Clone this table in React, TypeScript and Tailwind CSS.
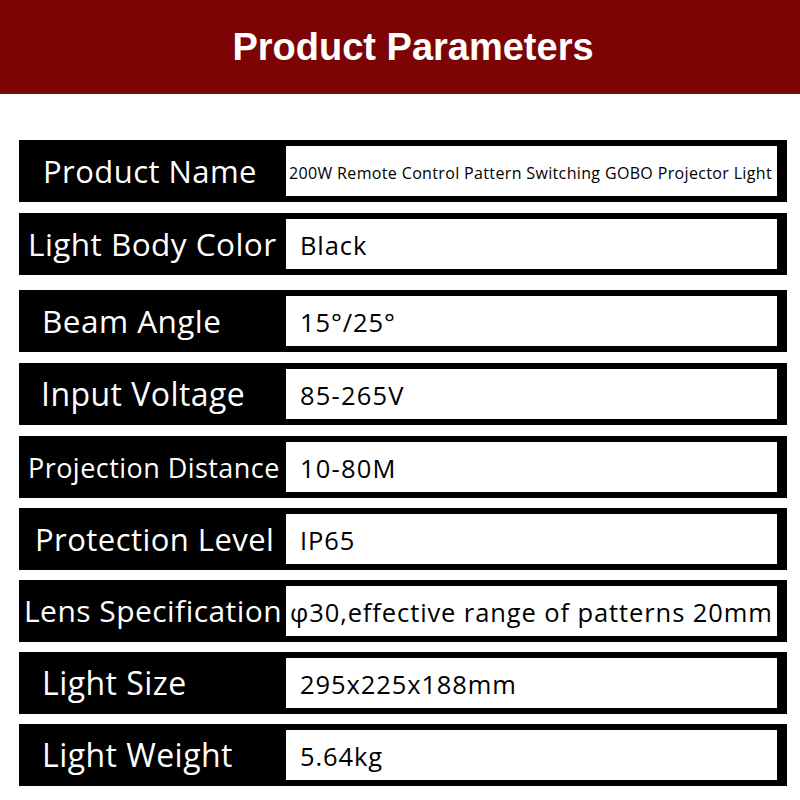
import React from "react";

type Row = {
  label: string;
  value: string;
  mt: string;
  lSize: string;
  lPad: string;
  vSize: string;
  vPad: string;
};

const rows: Row[] = [
  { label: "Product Name", value: "200W Remote Control Pattern Switching GOBO Projector Light", mt: "mt-[46px]", lSize: "text-[31px]", lPad: "pl-[24px]", vSize: "text-[16px] tracking-[0.35px]", vPad: "pl-[3px]" },
  { label: "Light Body Color", value: "Black", mt: "mt-[11px]", lSize: "text-[31.5px]", lPad: "pl-[9px]", vSize: "text-[25.5px] tracking-[0.9px]", vPad: "pl-[14px]" },
  { label: "Beam Angle", value: "15°/25°", mt: "mt-[15px]", lSize: "text-[31.5px]", lPad: "pl-[23px]", vSize: "text-[25.5px] tracking-[0.9px]", vPad: "pl-[14px]" },
  { label: "Input Voltage", value: "85-265V", mt: "mt-[11px]", lSize: "text-[32px]", lPad: "pl-[22px]", vSize: "text-[25.5px] tracking-[1.2px]", vPad: "pl-[14px]" },
  { label: "Projection Distance", value: "10-80M", mt: "mt-[11px]", lSize: "text-[27px]", lPad: "pl-[9px]", vSize: "text-[25.5px] tracking-[1.2px]", vPad: "pl-[14px]" },
  { label: "Protection Level", value: "IP65", mt: "mt-[10px]", lSize: "text-[31px]", lPad: "pl-[16px]", vSize: "text-[25.5px] tracking-[0.9px]", vPad: "pl-[14px]" },
  { label: "Lens Specification", value: "φ30,effective range of patterns 20mm", mt: "mt-[10px]", lSize: "text-[30px]", lPad: "pl-[5px]", vSize: "text-[25.5px] tracking-[0.9px]", vPad: "pl-[4px]" },
  { label: "Light Size", value: "295x225x188mm", mt: "mt-[10px]", lSize: "text-[32px]", lPad: "pl-[23px]", vSize: "text-[25.5px] tracking-[0.9px]", vPad: "pl-[14px]" },
  { label: "Light Weight", value: "5.64kg", mt: "mt-[10px]", lSize: "text-[32px]", lPad: "pl-[23px]", vSize: "text-[25.5px] tracking-[0.9px]", vPad: "pl-[14px]" },
];

export default function App() {
  return (
    <div className="w-[800px] h-[800px] bg-white overflow-hidden" style={{ fontFamily: "'Open Sans', 'Noto Sans', sans-serif" }}>
      <div className="h-[94px] bg-[#7c0404] flex items-center justify-center pl-[26px]">
        <h1 className="text-white text-[38px] font-bold leading-none" style={{ fontFamily: "'Liberation Sans', Arial, sans-serif" }}>
          Product Parameters
        </h1>
      </div>
      <div className="pl-[19px]">
        {rows.map((r) => (
          <div key={r.label} className={`${r.mt} w-[768px] h-[62px] bg-black flex items-stretch py-[6px] pr-[10px]`}>
            <div className={`w-[267px] shrink-0 flex items-center ${r.lPad}`}>
              <span className={`text-white ${r.lSize} tracking-[0.45px] leading-none whitespace-nowrap`}>{r.label}</span>
            </div>
            <div className={`flex-1 bg-white flex items-center pt-[3px] ${r.vPad}`}>
              <span className={`text-black ${r.vSize} leading-none whitespace-nowrap`}>{r.value}</span>
            </div>
          </div>
        ))}
      </div>
    </div>
  );
}
